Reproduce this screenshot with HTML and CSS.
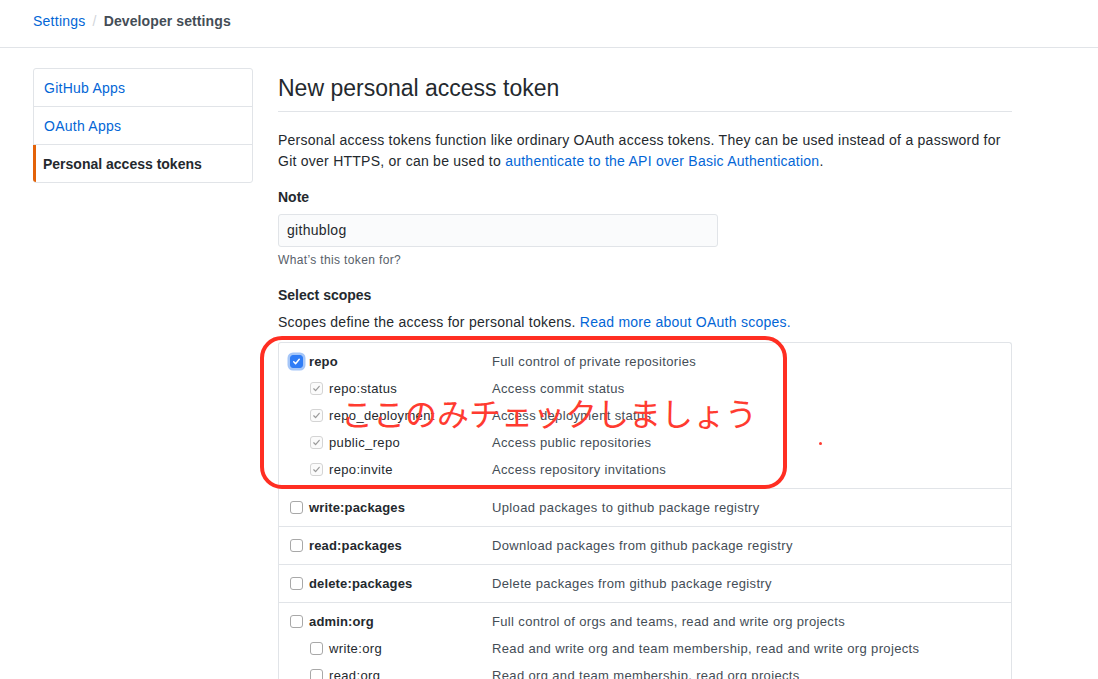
FILE: index.html
```html
<!DOCTYPE html>
<html lang="ja">
<head>
<meta charset="utf-8">
<title>New personal access token</title>
<link rel="stylesheet" href="styles.css">
</head>
<body>
<header class="crumbs">
  <a class="link" href="#">Settings</a>
  <span class="sep">/</span>
  <span class="current">Developer settings</span>
</header>
<div class="layout">
  <nav class="menu">
    <a class="menu-item" href="#">GitHub Apps</a>
    <a class="menu-item" href="#">OAuth Apps</a>
    <a class="menu-item selected" href="#">Personal access tokens</a>
  </nav>
  <main class="main">
    <h1 class="subhead">New personal access token</h1>
    <p class="intro">Personal access tokens function like ordinary OAuth access tokens. They can be used instead of a password for Git over HTTPS, or can be used to <a class="link" href="#">authenticate to the API over Basic Authentication</a>.</p>
    <div class="label">Note</div>
    <div class="input">githublog</div>
    <div class="hint">What’s this token for?</div>
    <div class="label scopes-label">Select scopes</div>
    <p class="scopes-desc">Scopes define the access for personal tokens. <a class="link" href="#">Read more about OAuth scopes.</a></p>

    <div class="scopes-wrap">
      <div class="scopes">
        <div class="group">
          <div class="row"><span class="cell"><span class="cb cb-on"><svg viewBox="0 0 12 12"><path d="M3 6.3l2 2.1 4-4.8" fill="none" stroke="#fff" stroke-width="1.6" stroke-linecap="round" stroke-linejoin="round"/></svg></span><b>repo</b></span><span class="desc">Full control of private repositories</span></div>
          <div class="row sub"><span class="cell"><span class="cb cb-dis"><svg viewBox="0 0 12 12"><path d="M3 6.3l2 2.1 4-4.8" fill="none" stroke="#9a9a9a" stroke-width="1.3" stroke-linecap="round" stroke-linejoin="round"/></svg></span>repo:status</span><span class="desc">Access commit status</span></div>
          <div class="row sub"><span class="cell"><span class="cb cb-dis"><svg viewBox="0 0 12 12"><path d="M3 6.3l2 2.1 4-4.8" fill="none" stroke="#9a9a9a" stroke-width="1.3" stroke-linecap="round" stroke-linejoin="round"/></svg></span>repo_deployment</span><span class="desc">Access deployment status</span></div>
          <div class="row sub"><span class="cell"><span class="cb cb-dis"><svg viewBox="0 0 12 12"><path d="M3 6.3l2 2.1 4-4.8" fill="none" stroke="#9a9a9a" stroke-width="1.3" stroke-linecap="round" stroke-linejoin="round"/></svg></span>public_repo</span><span class="desc">Access public repositories</span></div>
          <div class="row sub"><span class="cell"><span class="cb cb-dis"><svg viewBox="0 0 12 12"><path d="M3 6.3l2 2.1 4-4.8" fill="none" stroke="#9a9a9a" stroke-width="1.3" stroke-linecap="round" stroke-linejoin="round"/></svg></span>repo:invite</span><span class="desc">Access repository invitations</span></div>
        </div>
        <div class="group">
          <div class="row"><span class="cell"><span class="cb"></span><b>write:packages</b></span><span class="desc">Upload packages to github package registry</span></div>
        </div>
        <div class="group">
          <div class="row"><span class="cell"><span class="cb"></span><b>read:packages</b></span><span class="desc">Download packages from github package registry</span></div>
        </div>
        <div class="group">
          <div class="row"><span class="cell"><span class="cb"></span><b>delete:packages</b></span><span class="desc">Delete packages from github package registry</span></div>
        </div>
        <div class="group">
          <div class="row"><span class="cell"><span class="cb"></span><b>admin:org</b></span><span class="desc">Full control of orgs and teams, read and write org projects</span></div>
          <div class="row sub"><span class="cell"><span class="cb"></span>write:org</span><span class="desc">Read and write org and team membership, read and write org projects</span></div>
          <div class="row sub"><span class="cell"><span class="cb"></span>read:org</span><span class="desc">Read org and team membership, read org projects</span></div>
        </div>
      </div>
      <div class="callout"></div>
      <div class="callout-text">ここのみチェックしましょう</div>
      <div class="dot"></div>
    </div>
  </main>
</div>
</body>
</html>
```

FILE: styles.css
```css
* { box-sizing: border-box; }
html, body { margin: 0; padding: 0; background: #fff; overflow: hidden; }
body {
  font-family: "Liberation Sans", Arial, sans-serif;
  font-size: 14px;
  letter-spacing: 0.25px;
  color: #24292e;
  height: 679px;
}
b, .label, .current, .menu-item.selected { letter-spacing: 0; }
.link { color: #0366d6; text-decoration: none; }

.crumbs {
  height: 48px;
  border-bottom: 1px solid #e1e4e8;
  padding: 11px 0 0 33px;
  font-size: 14px;
  line-height: 20px;
  display: flex;
}
.crumbs .sep { color: #d1d5da; margin: 0 7px 0 7px; }
.crumbs .current { color: #444d56; font-weight: bold; letter-spacing: 0.1px; }

.layout {
  display: flex;
  padding: 20px 0 0 33px;
  gap: 25px;
}
.menu {
  width: 220px;
  flex: none;
  align-self: flex-start;
  border: 1px solid #e1e4e8;
  border-radius: 3px;
  display: flex;
  flex-direction: column;
}
.menu-item {
  height: 38px;
  line-height: 39px;
  padding-left: 10px;
  color: #0366d6;
  text-decoration: none;
  border-bottom: 1px solid #e1e4e8;
}
.menu-item:last-child { border-bottom: 0; height: 37px; line-height: 39px; }
.menu-item.selected {
  color: #24292e;
  font-weight: bold;
  border-left: 3px solid #e36209;
  padding-left: 7px;
  margin-left: -1px;
  border-bottom-left-radius: 3px;
}

.main { width: 734px; flex: none; }
.subhead {
  margin: 5px 0 0;
  font-size: 23px;
  font-weight: normal;
  letter-spacing: 0;
  line-height: 30px;
  padding-bottom: 8px;
  border-bottom: 1px solid #e1e4e8;
}
.intro { margin: 18px 0 0; line-height: 21px; }
.label { font-weight: bold; line-height: 21px; margin-top: 15px; }
.input {
  margin-top: 6px;
  width: 440px;
  height: 33px;
  border: 1px solid #e1e4e8;
  border-radius: 3px;
  background: #fafbfc;
  padding: 0 8px;
  line-height: 31px;
  font-size: 14px;
  letter-spacing: 0.3px;
}
.hint { margin-top: 4px; font-size: 12px; line-height: 18px; color: #586069; letter-spacing: 0.36px; }
.scopes-label { margin-top: 16px; }
.scopes-desc { margin: 6px 0 0; line-height: 21px; }

.scopes-wrap { position: relative; margin-top: 9px; }
.scopes {
  border: 1px solid #e1e4e8;
  border-bottom: 0;
  border-radius: 3px 3px 0 0;
  font-size: 13px;
  letter-spacing: 0.35px;
}
.group { padding: 5px 0; border-bottom: 1px solid #e1e4e8; }
.row {
  display: grid;
  grid-template-columns: 213px 1fr;
  height: 27px;
  align-items: center;
}
.cell { display: flex; align-items: center; padding-left: 11px; color: #24292e; }
.row.sub .cell { padding-left: 31px; }
.cell b { font-weight: bold; letter-spacing: 0.15px; }
.desc { color: #444d56; }

.cb {
  width: 13px;
  height: 13px;
  flex: none;
  margin-right: 6px;
  border: 1px solid #a8a8a8;
  border-radius: 3px;
  background: #fff;
  display: flex;
  align-items: center;
  justify-content: center;
}
.cb svg { width: 11px; height: 11px; display: block; }
.cb-on {
  background: #2f7cf6;
  border-color: #2f7cf6;
  box-shadow: 0 0 0 2.5px #a5c6f8;
}
.cb-dis { border-color: #d4d4d4; background: #fbfbfb; }

.callout {
  position: absolute;
  left: -18px;
  top: -6px;
  width: 527px;
  height: 153px;
  border: 4px solid #ff2e22;
  border-radius: 22px;
}
.callout-text {
  position: absolute;
  left: 63px;
  top: 50px;
  font-family: "Noto Sans CJK JP", sans-serif;
  font-size: 32px;
  line-height: 40px;
  letter-spacing: 0;
  color: #ff3b30;
  white-space: nowrap;
}
.dot {
  position: absolute;
  left: 541px;
  top: 100px;
  width: 3px;
  height: 3px;
  border-radius: 50%;
  background: #ff3b30;
}
```
